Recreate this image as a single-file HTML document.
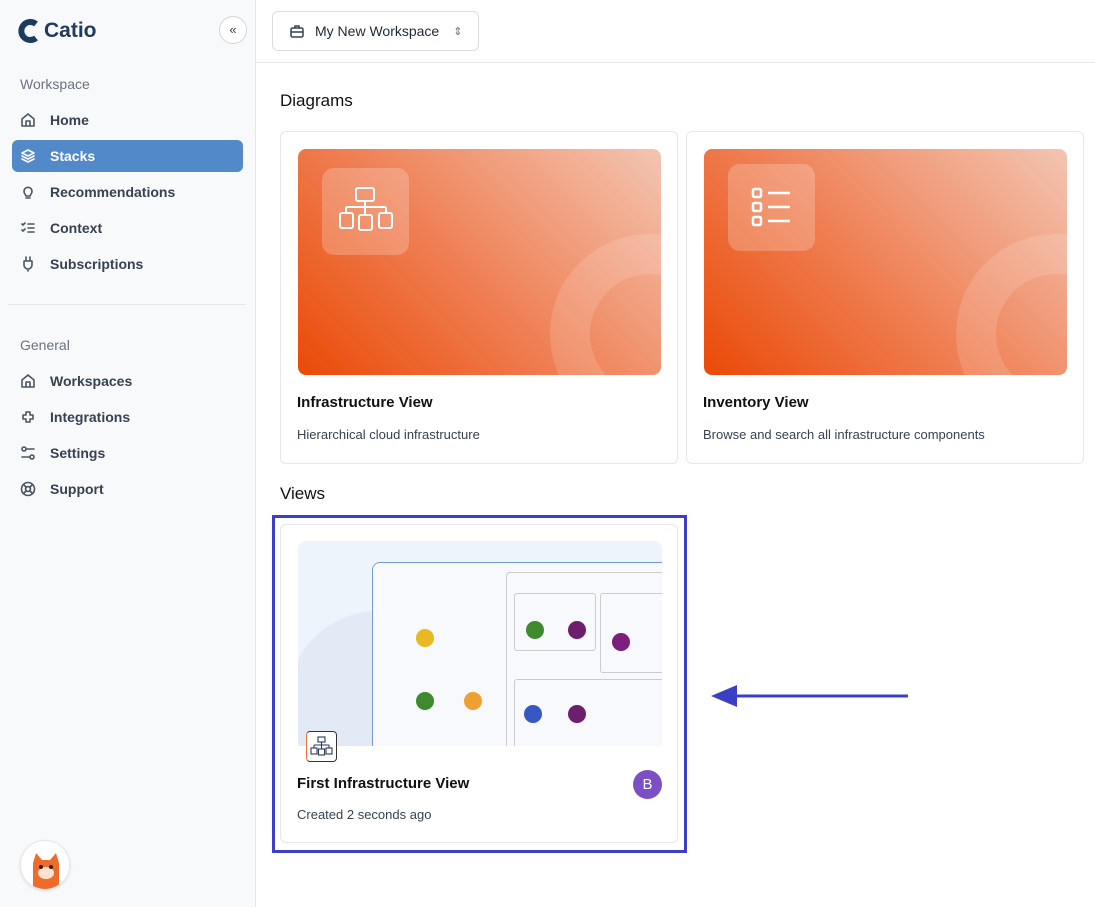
<!DOCTYPE html>
<html><head><meta charset="utf-8">
<style>
*{box-sizing:border-box;margin:0;padding:0}
body{width:1095px;height:907px;overflow:hidden;font-family:"Liberation Sans",sans-serif;background:#fff;position:relative;color:#1f2937}
.sb{position:absolute;left:0;top:0;width:256px;height:907px;background:#f8f9fa;border-right:1px solid #e5e7eb}
.logo{position:absolute;left:16px;top:18px;display:flex;align-items:center;gap:4px;font-weight:bold;font-size:21px;color:#1e3a5f}
.col{position:absolute;left:219px;top:16px;width:28px;height:28px;border:1px solid #d1d5db;border-radius:50%;background:#fff;font-size:13px;color:#374151;text-align:center;line-height:25px}
.sec{position:absolute;left:20px;font-size:14px;color:#6b7280}
.it{position:absolute;left:12px;width:231px;height:32px;border-radius:6px;display:flex;align-items:center;padding-left:8px;font-size:14px;font-weight:bold;color:#374151}
.it svg{width:16px;height:16px;margin-right:14px;fill:none;stroke:#4b5563;stroke-width:1.6;stroke-linecap:round;stroke-linejoin:round}
.it.act{background:#5289c9;color:#fff}
.it.act svg{stroke:#fff}
.hr{position:absolute;left:8px;top:304px;width:238px;height:1px;background:#e5e7eb}
.av{position:absolute;left:20px;top:840px;width:50px;height:50px;border-radius:50%;background:#fff;border:1px solid #e5e7eb;box-shadow:0 1px 3px rgba(0,0,0,.1);overflow:hidden}
.top{position:absolute;left:256px;top:0;right:0;height:63px;border-bottom:1px solid #e5e7eb}
.ws{position:absolute;left:16px;top:11px;width:207px;height:40px;border:1px solid #d9dde3;border-radius:6px;display:flex;align-items:center;padding-left:16px;font-size:14px;color:#1f2937}
h2{position:absolute;left:280px;font-size:17px;font-weight:normal;color:#111}
.card{position:absolute;border:1px solid #e5e7eb;border-radius:6px;background:#fff}
.img{position:absolute;left:17px;top:17px;width:363px;height:226px;border-radius:8px;overflow:hidden;background:linear-gradient(45deg,#ea4a06 0%,#ef7e52 45%,#f3c5b2 100%)}
.img .ic{position:absolute;left:24px;top:19px;width:87px;height:87px;border-radius:12px;background:rgba(255,255,255,.22)}
.img .ghost{position:absolute;left:252px;top:85px;width:200px;height:200px;border-radius:50%;border:40px solid rgba(255,255,255,.14)}
.ct{position:absolute;left:16px;font-size:15px;font-weight:bold;color:#111}
.cs{position:absolute;left:16px;font-size:13px;color:#374151}
</style></head><body>
<div class="sb">
 <div class="logo"><svg width="24" height="26" viewBox="0 0 24 26"><path d="M20 6 A9 9 0 1 0 20 20" fill="none" stroke="#1e3a5f" stroke-width="6"/></svg>Catio</div>
 <div class="col">«</div>
 <div class="sec" style="top:76px">Workspace</div>
 <div class="it" style="top:104px"><svg viewBox="0 0 16 16"><path d="M2 14V7l6-5 6 5v7zM6 14V9h4v5"/></svg>Home</div>
 <div class="it act" style="top:140px"><svg viewBox="0 0 16 16"><path d="M8 2l6 3-6 3-6-3zM2 8l6 3 6-3M2 11l6 3 6-3"/></svg>Stacks</div>
 <div class="it" style="top:176px"><svg viewBox="0 0 16 16"><path d="M5 10a4 4 0 1 1 6 0l-1 2H6zM6 14h4"/></svg>Recommendations</div>
 <div class="it" style="top:212px"><svg viewBox="0 0 16 16"><path d="M2 4l1 1 2-2M2 10l1 1 2-2M8 4h6M8 8h6M8 12h6"/></svg>Context</div>
 <div class="it" style="top:248px"><svg viewBox="0 0 16 16"><path d="M6 1v4M10 1v4M4 5h8v4a4 4 0 0 1-8 0zM8 13v2"/></svg>Subscriptions</div>
 <div class="hr"></div>
 <div class="sec" style="top:337px">General</div>
 <div class="it" style="top:365px"><svg viewBox="0 0 16 16"><path d="M2 14V7l6-5 6 5v7zM6 14V9h4v5"/></svg>Workspaces</div>
 <div class="it" style="top:401px"><svg viewBox="0 0 16 16"><path d="M3 6h3V3h4v3h3v4h-3v3H6v-3H3z"/></svg>Integrations</div>
 <div class="it" style="top:437px"><svg viewBox="0 0 16 16"><circle cx="4" cy="4" r="2"/><circle cx="12" cy="12" r="2"/><path d="M7 4h7M2 12h7"/></svg>Settings</div>
 <div class="it" style="top:473px"><svg viewBox="0 0 16 16"><circle cx="8" cy="8" r="6.5"/><circle cx="8" cy="8" r="2.5"/><path d="M3.5 3.5l3 3M12.5 3.5l-3 3M3.5 12.5l3-3M12.5 12.5l-3-3"/></svg>Support</div>
 <div class="av"><svg width="50" height="50" viewBox="0 0 50 50"><path d="M12 48V22l3-10 6 7h8l6-7 3 10v26z" fill="#ee6c2a"/><ellipse cx="25" cy="32" rx="8" ry="6" fill="#fde3cf"/><circle cx="20" cy="26" r="2" fill="#222"/><circle cx="30" cy="26" r="2" fill="#222"/></svg></div>
</div>
<div class="top"><div class="ws"><svg width="16" height="16" viewBox="0 0 16 16" fill="none" stroke="#374151" stroke-width="1.5"><rect x="2" y="5" width="12" height="9" rx="1.5"/><path d="M6 5V3h4v2M2 9h12"/></svg><span style="margin-left:10px">My New Workspace</span><span style="margin-left:14px;color:#6b7280;font-size:11px">⇕</span></div></div>

<h2 style="top:91px">Diagrams</h2>
<div class="card" style="left:280px;top:131px;width:398px;height:333px">
 <div class="img"><div class="ghost"></div><div class="ic"><svg width="87" height="87" viewBox="0 0 87 87" fill="none" stroke="#fff" stroke-width="2"><rect x="34" y="20" width="18" height="13" rx="2"/><path d="M43 33v6M24 39h40M24 39v6M43 39v8M64 39v6"/><rect x="18" y="45" width="13" height="15" rx="2"/><rect x="37" y="47" width="13" height="15" rx="2"/><rect x="57" y="45" width="13" height="15" rx="2"/></svg></div></div>
 <div class="ct" style="top:262px">Infrastructure View</div>
 <div class="cs" style="top:295px">Hierarchical cloud infrastructure</div>
</div>
<div class="card" style="left:686px;top:131px;width:398px;height:333px">
 <div class="img"><div class="ghost"></div><div class="ic" style="top:15px"><svg width="87" height="87" viewBox="0 0 87 87" fill="none" stroke="#fff" stroke-width="2.5"><rect x="25" y="25" width="8" height="8" rx="1.5"/><rect x="25" y="39" width="8" height="8" rx="1.5"/><rect x="25" y="53" width="8" height="8" rx="1.5"/><path d="M40 29h22M40 43h22M40 57h22"/></svg></div></div>
 <div class="ct" style="top:262px">Inventory View</div>
 <div class="cs" style="top:295px">Browse and search all infrastructure components</div>
</div>

<h2 style="top:484px">Views</h2>
<div style="position:absolute;left:272px;top:515px;width:415px;height:338px;border:3px solid #3b3fc6"></div>
<div class="card" style="left:280px;top:524px;width:398px;height:319px">
 <div style="position:absolute;left:17px;top:16px;width:364px;height:205px;border-radius:8px 8px 0 0;overflow:hidden;background:#eef4fb">
  <div style="position:absolute;left:-10px;top:70px;width:180px;height:180px;border-radius:50%;background:#e2ebf5"></div>
  <div style="position:absolute;left:74px;top:21px;width:320px;height:200px;border:1.5px solid #6f9bd6;border-radius:8px;background:#f7f9fc"></div>
  <div style="position:absolute;left:208px;top:31px;width:170px;height:190px;border:1px solid #ccc;border-radius:4px"></div>
  <div style="position:absolute;left:216px;top:52px;width:82px;height:58px;border:1px solid #ccc;border-radius:3px"></div>
  <div style="position:absolute;left:302px;top:52px;width:70px;height:80px;border:1px solid #ccc;border-radius:3px"></div>
  <div style="position:absolute;left:216px;top:138px;width:160px;height:70px;border:1px solid #ccc;border-radius:3px"></div>
  <div style="position:absolute;left:118px;top:88px;width:18px;height:18px;border-radius:50%;background:#e8b923"></div>
  <div style="position:absolute;left:118px;top:151px;width:18px;height:18px;border-radius:50%;background:#3f8a2e"></div>
  <div style="position:absolute;left:166px;top:151px;width:18px;height:18px;border-radius:50%;background:#eea032"></div>
  <div style="position:absolute;left:228px;top:80px;width:18px;height:18px;border-radius:50%;background:#3f8a2e"></div>
  <div style="position:absolute;left:270px;top:80px;width:18px;height:18px;border-radius:50%;background:#6d1f6d"></div>
  <div style="position:absolute;left:314px;top:92px;width:18px;height:18px;border-radius:50%;background:#7a1f7a"></div>
  <div style="position:absolute;left:226px;top:164px;width:18px;height:18px;border-radius:50%;background:#3558c4"></div>
  <div style="position:absolute;left:270px;top:164px;width:18px;height:18px;border-radius:50%;background:#6d1f6d"></div>
 </div>
 <div style="position:absolute;left:25px;top:206px;width:31px;height:31px;border:1px solid #333;border-left-color:#f07040;border-radius:4px;background:#fff"><svg width="29" height="29" viewBox="0 0 29 29" fill="none" stroke="#2b3a55" stroke-width="1.1"><rect x="11" y="5" width="7" height="5"/><path d="M14.5 10v3M7 13h15M7 13v3M22 13v3M14.5 13v4"/><rect x="4" y="16" width="6" height="6"/><rect x="11.5" y="17" width="6" height="6"/><rect x="19" y="16" width="6" height="6"/></svg></div>
 <div class="ct" style="top:250px">First Infrastructure View</div>
 <div class="cs" style="top:282px">Created 2 seconds ago</div>
 <div style="position:absolute;left:352px;top:245px;width:29px;height:29px;border-radius:50%;background:#7c4fc4;color:#fff;font-size:15px;text-align:center;line-height:29px">B</div>
</div>
<svg style="position:absolute;left:705px;top:683px" width="210" height="26"><path d="M203 13H18" stroke="#3b3fc6" stroke-width="3"/><path d="M6 13L32 2v22z" fill="#3b3fc6"/></svg>
</body></html>
